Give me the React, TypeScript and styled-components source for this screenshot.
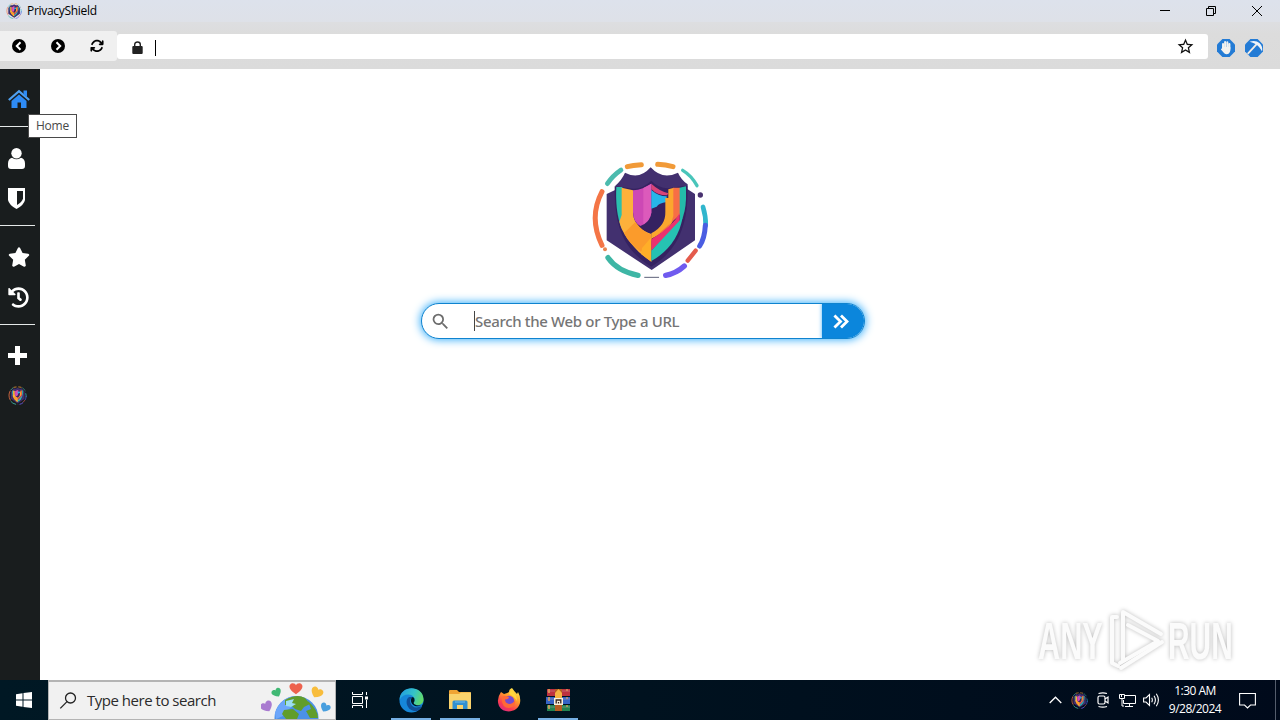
import type { ReactNode } from 'react';
import styled, { createGlobalStyle } from 'styled-components';
import { FaHistory, FaStar } from 'react-icons/fa';
import { FaArrowsRotate } from 'react-icons/fa6';
import { MdSearch, MdStarBorder } from 'react-icons/md';

const GlobalStyle = createGlobalStyle`
  * {
    box-sizing: border-box;
  }
  body {
    margin: 0;
    overflow: hidden;
    font-family: 'Open Sans', 'Noto Sans', sans-serif;
  }
  svg {
    display: block;
    flex-shrink: 0;
  }
`;

const Desktop = styled.div`
  position: relative;
  display: flex;
  flex-direction: column;
  width: 1280px;
  height: 720px;
  background: #fff;
`;

const TitleBar = styled.header`
  display: flex;
  align-items: center;
  height: 22px;
  padding-left: 6px;
  background: linear-gradient(#dde2ec, #dee1e8);
`;

const Title = styled.span`
  flex: 1;
  margin-left: 5px;
  font-size: 12px;
  line-height: 22px;
  letter-spacing: -0.3px;
  color: #000;
`;

const WindowButton = styled.div`
  display: flex;
  align-items: center;
  justify-content: center;
  width: 46px;
  height: 22px;
`;

const Toolbar = styled.div`
  display: flex;
  align-items: center;
  height: 47px;
  background: linear-gradient(#dddee1, #dcdcdc 12px, #dbdbdb);
`;

const NavButtons = styled.div`
  display: flex;
  width: 117px;
  height: 30px;
  border-radius: 0 3px 3px 0;
  background: #f0f0f0;
`;

const NavButton = styled.div`
  display: flex;
  align-items: center;
  justify-content: center;
  width: 39px;
  padding-right: 2px;
  color: #000;
`;

const AddressBar = styled.div`
  display: flex;
  align-items: center;
  width: 1091px;
  height: 25px;
  margin: 2px 8px 0 0;
  padding: 0 13px 0 15px;
  border-radius: 3px;
  background: #fff;
`;

const Caret = styled.div<{ $height: number; $gap: number; $color?: string }>`
  width: 1px;
  height: ${({ $height }) => $height}px;
  margin-left: ${({ $gap }) => $gap}px;
  background: ${({ $color }) => $color ?? '#000'};
`;

const AddressCaret = styled(Caret)`
  margin-top: 2px;
`;

const Spacer = styled.div`
  flex: 1;
`;

const Extension = styled.div`
  display: flex;
  align-items: center;
  justify-content: center;
  width: 20px;
  height: 20px;
  margin: 4px 8px 0 0;
`;

const Body = styled.div`
  display: flex;
  height: 611px;
`;

const Sidebar = styled.nav`
  width: 40px;
  background: #191d1e;
`;

const Group = styled.div`
  width: 35px;
  padding: 11px 0 7px;
  border-bottom: 1px solid #e4e8e8;
  &:first-child {
    padding-top: 10px;
  }
  &:last-child {
    padding-top: 10px;
    border-bottom: none;
  }
`;

const SideItem = styled.div<{ $active?: boolean }>`
  position: relative;
  display: flex;
  align-items: center;
  height: 40px;
  padding-left: 8px;
  color: ${({ $active }) => ($active ? '#2e8bf5' : '#fff')};
`;

const Tooltip = styled.div`
  position: absolute;
  top: 35px;
  left: 28px;
  z-index: 1;
  width: 49px;
  height: 24px;
  border: 1px solid #4a4a4a;
  background: #fff;
  color: #484848;
  font-size: 12px;
  line-height: 22px;
  letter-spacing: -0.2px;
  text-align: center;
`;

const Main = styled.main`
  display: flex;
  flex: 1;
  flex-direction: column;
  align-items: center;
  padding: 81px 34px 0 0;
`;

const HeroLogo = styled.div`
  margin-left: 14px;
`;

const SearchBox = styled.div`
  display: flex;
  align-items: center;
  width: 444px;
  height: 36px;
  margin-top: 13px;
  padding-left: 8px;
  overflow: hidden;
  border: 1px solid #0f83cf;
  border-radius: 18px;
  background: #fff;
  box-shadow: 0 0 8px 1px #3cb0fa;
  color: #6d6d6d;
`;

const Placeholder = styled.span`
  flex: 1;
  font-family: 'Noto Sans', sans-serif;
  font-size: 15px;
  font-weight: 500;
  letter-spacing: -0.34px;
  color: #757575;
`;

const GoButton = styled.div`
  display: flex;
  align-items: center;
  width: 42px;
  height: 36px;
  padding-left: 11px;
  background: #0b86dc;
  box-shadow: 0 0 4px #4fb2f5;
`;

const Watermark = styled.svg`
  position: absolute;
  top: 600px;
  left: 1030px;
`;

const Taskbar = styled.footer`
  display: flex;
  height: 40px;
  background: linear-gradient(90deg, #001824, #00121f 50%, #000a1b);
  color: #fff;
`;

const StartButton = styled.div`
  display: flex;
  align-items: center;
  width: 48px;
  padding-left: 16px;
`;

const TaskSearch = styled.div`
  display: flex;
  align-items: center;
  width: 288px;
  height: 40px;
  padding: 0 2px 0 10px;
  border: 1px solid #b4b4b4;
  border-top-width: 2px;
  background: #f1f1f1;
  overflow: hidden;
`;

const TaskSearchLabel = styled.span`
  flex: 1;
  margin: -2px 0 0 10px;
  font-size: 15px;
  letter-spacing: -0.48px;
  color: #2b2b2b;
`;

const TaskButton = styled.div<{ $open?: boolean }>`
  display: flex;
  align-items: center;
  justify-content: center;
  width: 40px;
  height: 40px;
  margin-right: 9px;
  padding-top: 2px;
  border-bottom: 2px solid ${({ $open }) => ($open ? '#76b0e4' : 'transparent')};
`;

const TaskView = styled(TaskButton)`
  margin: 0 12px 0 3px;
`;

const Tray = styled.div`
  display: flex;
  align-items: center;
  margin-left: auto;
`;

const TrayIcon = styled.div`
  display: flex;
  justify-content: center;
  width: 24px;
`;

const Clock = styled.div`
  width: 64px;
  font-size: 12px;
  line-height: 18px;
  letter-spacing: -0.5px;
  text-align: center;
`;

const Notifications = styled.div`
  display: flex;
  align-items: center;
  width: 49px;
  height: 40px;
  margin-right: 4px;
  padding-left: 12px;
  border-right: 1px solid #545d6c;
`;

const ShieldLogo = ({ size, box = '30 25 360 365' }: { size: number; box?: string }) => (
  <svg width={size} height={size} viewBox={box}>
    <path d="M107 119 L106 107 Q126 89 135 68 Q178 91 212 52 Q247 91 294 68 Q303 89 323 103 V118 L345 132 V271 L215 360 L80 271 V132 Z" fill="#42306f" />
    <path d="M214 92 Q180 124 145 114 L104 109 C104 212 119 293 214 350 C307 293 326 201 322 107 L283 112 Q242 122 214 92 Z" fill="#352261" />
    <path d="M109 111 H127 V240 C109 200 107 150 109 111 Z" fill="#2bbfae" />
    <path d="M125 113 L159 121 V190 C162 225 188 245 214 252 V335 C163 302 125 250 118 215 L125 195 Z" fill="#fdb13b" />
    <path d="M132 250 L166 216 Q189 246 214 254 V272 L183 305 Q149 284 132 250 Z" fill="#fb9b2b" />
    <path d="M186 294 L214 262 V335 L184 313 Z" fill="#ffae28" />
    <path d="M159 121 Q190 119 214 101 V188 Q210 217 181 228 Q160 217 159 187 Z" fill="#cd48b5" />
    <path d="M190 114 L214 101 V188 Q210 211 190 223 Z" fill="#dc5abb" />
    <path d="M214 101 Q235 121 265 130 L261 136 Q231 136 214 117 Z" fill="#d94478" />
    <path d="M214 120 Q235 139 260 139 V156 Q236 160 230 170 L214 176 Z" fill="#27b6e9" />
    <path d="M256 185 V144 H265 V118 L282 113 V200 C279 228 245 250 214 266 V250 C244 234 257 212 256 185 Z" fill="#fba72e" />
    <path d="M280 113 H300 V194 L232 255 Q276 230 280 198 Z" fill="#f76e45" />
    <path d="M299 113 L318 109 V147 Q317 185 303 216 L299 218 Z" fill="#24bca9" />
    <path d="M214 268 Q277 230 299 190 V220 L214 302 Z" fill="#ec316f" />
    <path d="M214 302 L308 202 Q292 290 214 333 Z" fill="#26c2b2" />
    <g fill="none" strokeLinecap="round">
      <path d="M66 125 C43 169 36 225 66 286" stroke="#f47546" strokeWidth="15" />
      <path d="M82 101 Q98 77 123 60" stroke="#4cbbae" strokeWidth="14" />
      <path d="M142 50 Q158 46 184 44" stroke="#f19a38" strokeWidth="15" />
      <path d="M233 43 Q257 44 279 50" stroke="#f19a38" strokeWidth="15" />
      <path d="M308 61 Q334 76 351 107" stroke="#49c5ba" strokeWidth="10" />
      <path d="M369 171 Q378 200 377 226" stroke="#31b6cd" strokeWidth="14" />
      <path d="M376 226 Q374 265 359 288" stroke="#4a5de2" strokeWidth="15" />
      <path d="M347 302 L323 332" stroke="#e45b4c" strokeWidth="13" />
      <path d="M313 348 Q289 370 257 376" stroke="#705bef" strokeWidth="16" />
      <path d="M84 323 Q112 363 174 376" stroke="#3eb6a5" strokeWidth="16" />
      <path d="M194 382 H236" stroke="#5d6179" strokeWidth="3" />
    </g>
    <circle cx="361" cy="135" r="8" fill="#493270" />
    <circle cx="75" cy="298" r="6" fill="#e98550" />
  </svg>
);

const CircleChevron = ({ right }: { right?: boolean }) => (
  <svg width="14" height="14" viewBox="0 0 14 14">
    <circle cx="7" cy="7" r="7" fill="#000" />
    <path d={right ? 'M5.5 3.3 9.2 7 5.5 10.7' : 'M8.5 3.3 4.8 7 8.5 10.7'} fill="none" stroke="#fff" strokeWidth="2" />
  </svg>
);

const HomeIcon = () => (
  <svg width="22" height="20" viewBox="0 0 22 20">
    <path d="M.8 11 11 2.2 21.2 11" fill="none" stroke="#4fa0f0" strokeWidth="2.2" />
    <path d="M15.5 1.5H19V8.5L15.5 5.5Z" fill="#2e8bf5" />
    <path d="M3.5 12 11 5.6 18.5 12V19H13V13.5H9.5V19H3.5Z" fill="currentColor" />
  </svg>
);

const WindowIcon = ({ children }: { children: ReactNode }) => (
  <svg width="12" height="12" viewBox="0 0 12 12" fill="none" stroke="#000">
    {children}
  </svg>
);

const Heart = ({ x, y, scale, rotate = 0, color }: { x: number; y: number; scale: number; rotate?: number; color: string }) => (
  <path
    d="M0 5.5 C-10 -.5 -7 -6 -3.5 -6 C-1.5 -6 -.5 -5 0 -4 C.5 -5 1.5 -6 3.5 -6 C7 -6 10 -.5 0 5.5Z"
    transform={`translate(${x} ${y}) rotate(${rotate}) scale(${scale})`}
    fill={color}
  />
);

const EarthArt = () => (
  <svg width="72" height="37" viewBox="0 0 72 37">
    <Heart x={6} y={25} scale={0.9} rotate={-28} color="#a97bd0" />
    <Heart x={16} y={11} scale={0.72} rotate={-30} color="#40b873" />
    <Heart x={35} y={7} scale={0.95} color="#ed624e" />
    <Heart x={55.5} y={11} scale={0.9} rotate={28} color="#f8bd3c" />
    <Heart x={64} y={26} scale={0.74} rotate={28} color="#489ede" />
    <circle cx="35.5" cy="36" r="22" fill="#4b91e8" />
    <path d="M14 31 Q20 14 36 14 L29 20 26 24 31 25 25 29 22 34 15 37 Z" fill="#6ca6fa" />
    <path d="M24 18 Q36 11 44 16 L49 22 43 25 40 29 34 27 30 23 24 23 Z M47 19 Q57 28 57 36 L49 36 45 29 50 27 Z M23 28 L32 27 38 32 36 37 H25 L21 32 Z" fill="#619d2b" />
    <path d="M25 19 L33 17 31 21 35 22 30 25 25 24 Z" fill="#9cdef2" />
  </svg>
);

const EdgeIcon = () => (
  <svg width="25" height="25" viewBox="0 0 25 25">
    <defs>
      <linearGradient id="edgeTop" x1="0" y1=".3" x2="1" y2=".6">
        <stop stopColor="#229ee1" />
        <stop offset=".55" stopColor="#35c3c7" />
        <stop offset="1" stopColor="#65db62" />
      </linearGradient>
    </defs>
    <circle cx="12.5" cy="12.5" r="12" fill="#1687d9" />
    <path d="M.5 12 C1-4 24-3 24.5 11 C25 18 17 18 15 16 C14 14 16 14 15.5 11 C14 5 4 5 .5 12Z" fill="url(#edgeTop)" />
    <path d="M10 9 C5 12 8 24 18 23 Q22 21 23 18 Q14 22 11.5 15 Q10 11 14 9 Z" fill="#104f98" />
    <path d="M14 9 C11 10 11 16 16 18 Q20 19 23 17 L24 19 H25 V16 Q20 19 15 16 Q14 15 15.5 13 Q16 10 14 9Z" fill="#001520" />
  </svg>
);

const FolderIcon = () => (
  <svg width="23" height="20" viewBox="0 0 23 20">
    <path d="M0 1 Q0 0 1 0 H8 L10 2 H21 Q22 2 22 3 V19 H0 Z" fill="#f0a433" />
    <path d="M0 4 H10 L12 2.5 H22 V19 H0 Z" fill="#fad36c" />
    <path d="M3.5 19 V12 Q3.5 10.5 5 10.5 H17 Q18.5 10.5 18.5 12 V19 H14 V15 H8 V19 Z" fill="#3290d0" />
    <path d="M6 12 H16" stroke="#70bbeb" />
  </svg>
);

const FirefoxIcon = () => (
  <svg width="24" height="24" viewBox="0 0 24 24">
    <defs>
      <linearGradient id="fox" x1=".8" y1="0" x2=".2" y2="1">
        <stop stopColor="#fff44f" />
        <stop offset=".4" stopColor="#ff9a2b" />
        <stop offset=".75" stopColor="#fb3b50" />
        <stop offset="1" stopColor="#d92b86" />
      </linearGradient>
    </defs>
    <path d="M4 4 L7 6 Q11 5 12 4 Q12 1 15 0 Q17 3 20 6 L21 4 Q24 9 23 15 C21 24 7 27 2 18 Q-1 11 4 4Z" fill="url(#fox)" />
    <circle cx="12" cy="13" r="5.2" fill="#744bd0" />
    <path d="M5 9 Q7 7 12 9 Q12 11 8 11.5 Q8 15 12 16 Q16 16 18 12 Q19 19 12 20 Q4 20 5 9Z" fill="#ff6937" />
    <path d="M14 2 Q20 6 20 13 Q17 8 12 6 Z" fill="#ffd83c" />
  </svg>
);

const WinrarIcon = () => (
  <svg width="25" height="24" viewBox="0 0 25 24">
    <rect x="1" y="1" width="23" height="7" fill="#bd3140" />
    <rect y="9" width="24" height="7" fill="#3563c5" />
    <rect x="1" y="17" width="23" height="6" fill="#228351" />
    <path d="M1 3 H24 M1 11 H24 M1 19 H24" stroke="#d4b1b6" opacity=".4" />
    <path d="M3 1 V23" stroke="#e4a55b" strokeWidth="1.5" strokeDasharray="4 4" />
    <path d="M21 1 V23" stroke="#e4a55b" strokeWidth="1.2" strokeDasharray="2 6" />
    <rect x="9" y="1" width="7" height="22" fill="#b55c22" />
    <path d="M9 5 L12.5 1 16 5 V10 H9 Z" fill="#f5b344" />
    <rect x="8" y="10" width="9" height="7" fill="#f8edda" />
    <path d="M10.2 15.5 V12 H14.8 V15.5 M12.5 14 V15.5" fill="none" stroke="#33231b" strokeWidth="1.3" />
  </svg>
);

const App = () => {
  return (
    <Desktop>
      <GlobalStyle />
      <TitleBar>
        <ShieldLogo size={16} />
        <Title>PrivacyShield</Title>
        <WindowButton>
          <WindowIcon>
            <path d="M1 5.5H11" />
          </WindowIcon>
        </WindowButton>
        <WindowButton>
          <WindowIcon>
            <path d="M1.5 3.5H8.5V10.5H1.5Z M3.5 3V1.5H10.5V8.5H9" />
          </WindowIcon>
        </WindowButton>
        <WindowButton>
          <WindowIcon>
            <path d="M1 1 11 11 M11 1 1 11" />
          </WindowIcon>
        </WindowButton>
      </TitleBar>

      <Toolbar>
        <NavButtons>
          <NavButton>
            <CircleChevron />
          </NavButton>
          <NavButton>
            <CircleChevron right />
          </NavButton>
          <NavButton>
            <FaArrowsRotate size={14} />
          </NavButton>
        </NavButtons>
        <AddressBar>
          <svg width="11" height="15" viewBox="0 -2 11 15">
            <path d="M2.7 6V3.6C2.7.1 8.3.1 8.3 3.6V6" fill="none" stroke="#222" strokeWidth="1.4" />
            <rect x=".3" y="5" width="10.4" height="8" rx="1" fill="#222" />
          </svg>
          <AddressCaret $height={16} $gap={12} />
          <Spacer />
          <MdStarBorder size={19} color="#111" />
        </AddressBar>
        <Extension>
          <svg width="18" height="18" viewBox="0 0 20 20">
            <path d="M6 0H14L20 6V14L14 20H6L0 14V6Z" fill="#237bd5" />
            <path d="M6.7 11V5.5M9 10V3.2M11.5 10V3.5M13.8 11V5.5" stroke="#f3f2ef" strokeWidth="2.2" strokeLinecap="round" />
            <path d="M5.6 9H14.8V13Q13.8 17 10.5 17Q8.6 17 7 14.6L4.4 11.6Q4.3 10 5.7 11Z" fill="#f3f2ef" />
          </svg>
        </Extension>
        <Extension>
          <svg width="18" height="18" viewBox="0 0 20 20">
            <path d="M6 0H14L20 6V14L14 20H6L0 14V6Z" fill="#237bd5" />
            <path d="M3 16.5 14 4.5" stroke="#f5eee6" strokeWidth="2" />
            <path d="M5 3 Q12 1 16 4.5 Q20 8 19 14 Q16 8 11.5 5.5 Q9 4 5 3Z" fill="#eef4fa" />
          </svg>
        </Extension>
      </Toolbar>

      <Body>
        <Sidebar>
          <Group>
            <SideItem $active>
              <HomeIcon />
              <Tooltip>Home</Tooltip>
            </SideItem>
          </Group>
          <Group>
            <SideItem>
              <svg width="17" height="21" viewBox="0 0 17 21" fill="currentColor">
                <circle cx="8.5" cy="5.2" r="5.2" />
                <path d="M4 9.8 Q8.5 12.8 13 9.8 Q17 11 17 15.5 V18 Q17 21 14 21 H3 Q0 21 0 18 V15.5 Q0 11 4 9.8Z" />
              </svg>
            </SideItem>
            <SideItem>
              <svg width="17" height="21" viewBox="0 0 17 21">
                <path d="M0 0 H17 V12 Q16 17 8.5 21 Q1 17 0 12Z" fill="#fff" />
                <path d="M9 3H15V10.5Q14 14.3 9 17Z" fill="#191d1e" />
              </svg>
            </SideItem>
          </Group>
          <Group>
            <SideItem>
              <FaStar size={22} />
            </SideItem>
            <SideItem>
              <FaHistory size={21} />
            </SideItem>
          </Group>
          <Group>
            <SideItem>
              <svg width="19" height="19" viewBox="0 0 19 19">
                <path d="M7 0H12V7H19V12H12V19H7V12H0V7H7Z" fill="#fff" />
              </svg>
            </SideItem>
            <SideItem>
              <ShieldLogo size={19} />
            </SideItem>
          </Group>
        </Sidebar>

        <Main>
          <HeroLogo>
            <ShieldLogo size={140} box="0 0 420 420" />
          </HeroLogo>
          <SearchBox>
            <MdSearch size={21} />
            <Caret $height={20} $gap={23} $color="#444" />
            <Placeholder>Search the Web or Type a URL</Placeholder>
            <GoButton>
              <svg width="16" height="15" viewBox="0 0 17 16" fill="none" stroke="#fff" strokeWidth="3">
                <path d="M1.5 1.5 8 8 1.5 14.5 M8.5 1.5 15 8 8.5 14.5" />
              </svg>
            </GoButton>
          </SearchBox>
        </Main>
      </Body>

      <Watermark width="240" height="80" viewBox="0 0 240 80">
        <g style={{ filter: 'drop-shadow(0 0 2px #bbb)' }}>
          <g fill="#fbfbfb" fontFamily="'Liberation Sans', sans-serif" fontSize="52" fontWeight="bold">
            <text transform="translate(8 59) scale(.59 1)">ANY</text>
            <text transform="translate(138 59) scale(.575 1)">RUN</text>
          </g>
          <g fill="none" stroke="#fbfbfb" strokeWidth="4" strokeLinejoin="round" strokeLinecap="round">
            <path d="M87 17 H82 V63 L88 66" />
            <path d="M93 60 V12 L131 34" />
            <path d="M98 25 L128 41 L90 63" />
            <path d="M132 42 L91 68" />
          </g>
        </g>
      </Watermark>

      <Taskbar>
        <StartButton>
          <svg width="16" height="16" viewBox="0 0 16 16" fill="#fff">
            <path d="M0 2.2 6.5 1.3V7.5H0Z M7.5 1.1 16 0V7.5H7.5Z M0 8.5H6.5V14.7L0 13.8Z M7.5 8.5H16V16L7.5 14.9Z" />
          </svg>
        </StartButton>
        <TaskSearch>
          <svg width="18" height="18" viewBox="0 0 18 18" fill="none" stroke="#222" strokeWidth="1.3">
            <circle cx="11.5" cy="6" r="5" />
            <path d="M8 9.6 1.3 16.4" />
          </svg>
          <TaskSearchLabel>Type here to search</TaskSearchLabel>
          <EarthArt />
        </TaskSearch>
        <TaskView>
          <svg width="17" height="16" viewBox="0 0 17 16" fill="none" stroke="#fff">
            <path d="M1.5 4.5H11.5V11.5H1.5Z M1.5 0V2.5H11.5V0M1.5 16V13.5H11.5V16M15.5 0V3M15.5 8V16" />
            <path d="M14 4.5H17V7.5H14Z" fill="#fff" stroke="none" />
          </svg>
        </TaskView>
        <TaskButton $open>
          <EdgeIcon />
        </TaskButton>
        <TaskButton $open>
          <FolderIcon />
        </TaskButton>
        <TaskButton>
          <FirefoxIcon />
        </TaskButton>
        <TaskButton $open>
          <WinrarIcon />
        </TaskButton>

        <Tray>
          <TrayIcon>
            <svg width="13" height="8" viewBox="0 0 13 8" fill="none" stroke="#fff" strokeWidth="1.3">
              <path d="M.7 7 6.5 1.2 12.3 7" />
            </svg>
          </TrayIcon>
          <TrayIcon>
            <ShieldLogo size={17} />
          </TrayIcon>
          <TrayIcon>
            <svg width="12" height="16" viewBox="0 0 12 16" fill="none" stroke="#fff" strokeWidth="1.2">
              <rect x="1" y="4" width="7" height="8" rx="1.5" />
              <path d="M8 7 11 5V11L8 9M1.5 1.5Q6 .2 10 1.5M1.5 14.5Q6 15.8 10 14.5" />
            </svg>
          </TrayIcon>
          <TrayIcon>
            <svg width="17" height="14" viewBox="0 0 17 14" fill="none" stroke="#fff">
              <path d="M6 2.5H16.5V10.5H4.5V7M10.5 11V13M6 13.5H14M.5 1.5H5.5V5.5H.5ZM3 6V13H5M2.5 1.5V4" />
            </svg>
          </TrayIcon>
          <TrayIcon>
            <svg width="17" height="14" viewBox="0 0 17 14" fill="none" stroke="#fff" strokeWidth="1.1">
              <path d="M.6 5H3L6.5 1.5V12.5L3 9H.6ZM8.7 4.7Q10 7 8.7 9.3M11 2.7Q13.8 7 11 11.3M13.3.8Q17.5 7 13.3 13.2" />
            </svg>
          </TrayIcon>
          <Clock>
            1:30 AM
            <br />
            9/28/2024
          </Clock>
          <Notifications>
            <svg width="17" height="17" viewBox="0 0 17 17" fill="none" stroke="#fff" strokeWidth="1.1">
              <path d="M.6 1.5H16.4V13H11.5L8.5 16 5.5 13H.6Z" />
            </svg>
          </Notifications>
        </Tray>
      </Taskbar>
    </Desktop>
  );
};

export default App;
